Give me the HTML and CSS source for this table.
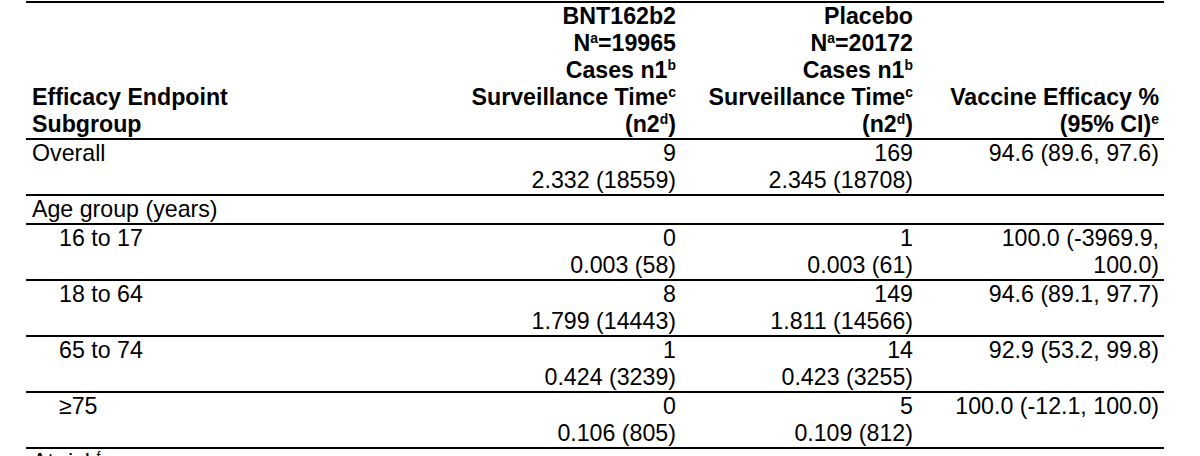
FILE: index.html
```html
<!DOCTYPE html>
<html lang="en">
<head>
<meta charset="utf-8">
<title>Vaccine Efficacy by Subgroup</title>
<link rel="stylesheet" href="styles.css">
</head>
<body>
<table class="eff">
  <colgroup>
    <col class="c1"><col class="c2"><col class="c3"><col class="c4">
  </colgroup>
  <thead>
    <tr class="hd">
      <th class="lab">Efficacy Endpoint<br>Subgroup</th>
      <th class="num">BNT162b2<br>N<sup>a</sup>=19965<br>Cases n1<sup>b</sup><br>Surveillance Time<sup>c</sup><br>(n2<sup>d</sup>)</th>
      <th class="num">Placebo<br>N<sup>a</sup>=20172<br>Cases n1<sup>b</sup><br>Surveillance Time<sup>c</sup><br>(n2<sup>d</sup>)</th>
      <th class="num">Vaccine Efficacy %<br>(95% CI)<sup>e</sup></th>
    </tr>
  </thead>
  <tbody>
    <tr>
      <td class="lab">Overall</td>
      <td class="num">9<br>2.332 (18559)</td>
      <td class="num">169<br>2.345 (18708)</td>
      <td class="num">94.6 (89.6, 97.6)</td>
    </tr>
    <tr>
      <td class="lab">Age group (years)</td>
      <td class="num"></td>
      <td class="num"></td>
      <td class="num"></td>
    </tr>
    <tr>
      <td class="lab sub">16 to 17</td>
      <td class="num">0<br>0.003 (58)</td>
      <td class="num">1<br>0.003 (61)</td>
      <td class="num">100.0 (-3969.9,<br>100.0)</td>
    </tr>
    <tr>
      <td class="lab sub">18 to 64</td>
      <td class="num">8<br>1.799 (14443)</td>
      <td class="num">149<br>1.811 (14566)</td>
      <td class="num">94.6 (89.1, 97.7)</td>
    </tr>
    <tr>
      <td class="lab sub">65 to 74</td>
      <td class="num">1<br>0.424 (3239)</td>
      <td class="num">14<br>0.423 (3255)</td>
      <td class="num">92.9 (53.2, 99.8)</td>
    </tr>
    <tr>
      <td class="lab sub">&ge;75</td>
      <td class="num">0<br>0.106 (805)</td>
      <td class="num">5<br>0.109 (812)</td>
      <td class="num">100.0 (-12.1, 100.0)</td>
    </tr>
    <tr class="last">
      <td class="lab">At risk<sup>f</sup></td>
      <td class="num"></td>
      <td class="num"></td>
      <td class="num"></td>
    </tr>
  </tbody>
</table>
</body>
</html>
```

FILE: styles.css
```css
html, body {
  margin: 0;
  padding: 0;
  background: #ffffff;
}

body {
  padding-top: 1px;
  font-family: "Liberation Sans", Arial, sans-serif;
  color: #000;
  overflow: hidden;
}

.eff {
  margin-left: 26px;
  width: 1138px;
  border-collapse: collapse;
  table-layout: fixed;
  border-top: 2px solid #000;
  font-size: 23.2px;
  line-height: 27px;
}

.c1 { width: 394px; }
.c2 { width: 261px; }
.c3 { width: 237px; }
.c4 { width: 246px; }

.eff th,
.eff td {
  padding: 0 5px 0 6px;
  border-bottom: 2px solid #000;
  vertical-align: top;
  white-space: nowrap;
}

.eff th {
  font-weight: bold;
  vertical-align: bottom;
}

.eff .lab { text-align: left; }
.eff .num { text-align: right; }
.eff td.sub { padding-left: 33px; }

.eff tr.last td { border-bottom: none; }

.eff sup {
  font-size: 0.6em;
  line-height: 0;
  vertical-align: 0.55em;
}
```
